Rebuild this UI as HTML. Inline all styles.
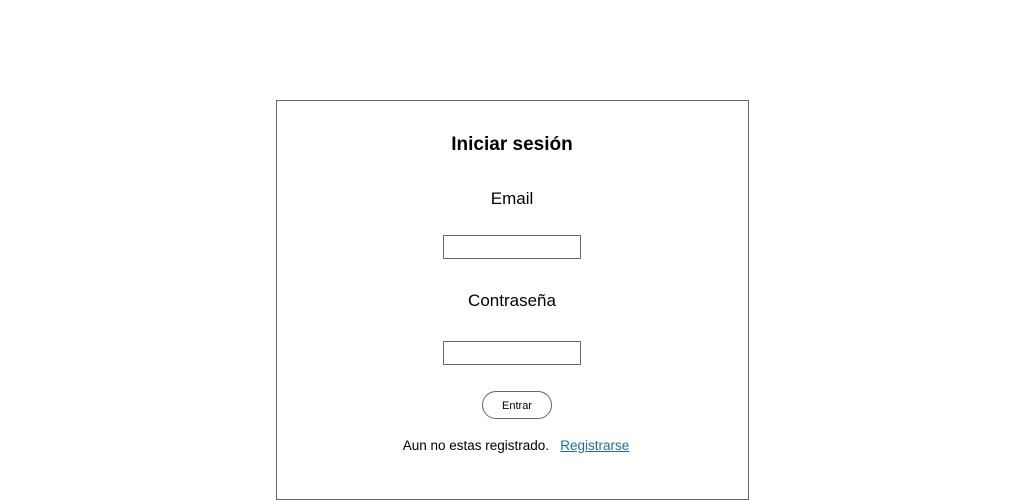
<!DOCTYPE html>
<html><head><style>
body{margin:0;width:1024px;height:500px;background:#fff;font-family:"Liberation Sans",sans-serif;position:relative;overflow:hidden}
.box{position:absolute;left:276px;top:100px;width:471px;height:398px;border:1px solid #666}
.a{position:absolute;left:0;width:1024px;text-align:center;color:#000}
.in{position:absolute;left:443px;width:136px;height:22px;border:1px solid #666}
.btn{position:absolute;left:482px;top:391px;width:68px;height:26px;border:1px solid #666;border-radius:14px;font-size:11px;text-align:center;line-height:28px}
a{color:#1a6fa0;text-decoration:underline}
</style></head><body>
<div class="box"></div>
<div class="a" style="top:134px;font-size:19px;font-weight:bold">Iniciar sesión</div>
<div class="a" style="top:189px;font-size:17px">Email</div>
<div class="in" style="top:235px"></div>
<div class="a" style="top:291px;font-size:17px">Contraseña</div>
<div class="in" style="top:341px"></div>
<div class="btn">Entrar</div>
<div class="a" style="top:438px;font-size:13.5px;left:4px">Aun no estas registrado. &nbsp; <a>Registrarse</a></div>
</body></html>
